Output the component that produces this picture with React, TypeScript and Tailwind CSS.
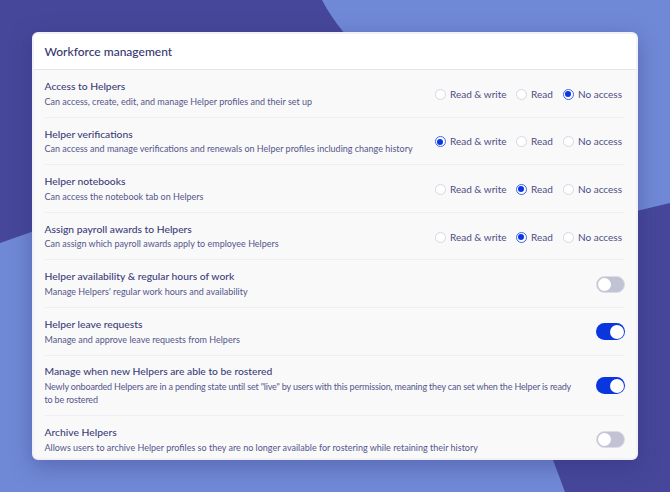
const FONT = "font-['Lato','Liberation_Sans',sans-serif]"

type Access = 'rw' | 'r' | 'none'

interface Row {
  title: string
  desc: string
  access?: Access
  on?: boolean
  tall?: boolean
}

const ROWS: Row[] = [
  { title: 'Access to Helpers', desc: 'Can access, create, edit, and manage Helper profiles and their set up', access: 'none' },
  { title: 'Helper verifications', desc: 'Can access and manage verifications and renewals on Helper profiles including change history', access: 'rw' },
  { title: 'Helper notebooks', desc: 'Can access the notebook tab on Helpers', access: 'r' },
  { title: 'Assign payroll awards to Helpers', desc: 'Can assign which payroll awards apply to employee Helpers', access: 'r' },
  { title: 'Helper availability & regular hours of work', desc: "Manage Helpers' regular work hours and availability", on: false },
  { title: 'Helper leave requests', desc: 'Manage and approve leave requests from Helpers', on: true },
  {
    title: 'Manage when new Helpers are able to be rostered',
    desc: 'Newly onboarded Helpers are in a pending state until set "live" by users with this permission, meaning they can set when the Helper is ready to be rostered',
    on: true,
    tall: true,
  },
  { title: 'Archive Helpers', desc: 'Allows users to archive Helper profiles so they are no longer available for rostering while retaining their history', on: false },
]

function Radio({ label, checked, width }: { label: string; checked: boolean; width: string }) {
  return (
    <div className={`flex shrink-0 items-center gap-[4.5px] ${width}`}>
      {checked ? (
        <span className="flex h-[11px] w-[11px] shrink-0 items-center justify-center rounded-full border border-[#3d63f2] bg-white">
          <span className="h-[6px] w-[6px] rounded-full bg-[#0a36e0]" />
        </span>
      ) : (
        <span className="h-[11px] w-[11px] shrink-0 rounded-full border border-[#d6d7e4] bg-white" />
      )}
      <span className="whitespace-nowrap text-[10px] text-[#4c4d82]">{label}</span>
    </div>
  )
}

function Toggle({ on }: { on: boolean }) {
  return on ? (
    <div className="mt-[1px] flex h-[17px] w-[29px] shrink-0 items-center justify-end rounded-full bg-[#0a36e0] pr-[1px]">
      <span className="h-[14px] w-[14px] rounded-full bg-white" />
    </div>
  ) : (
    <div className="mt-[1px] flex h-[17px] w-[29px] shrink-0 items-center rounded-full border border-[#dcdce6] bg-[#c1c2d4] pl-[1px]">
      <span className="h-[13px] w-[13px] rounded-full bg-white" />
    </div>
  )
}

export default function App() {
  return (
    <div className={`relative h-[492px] w-[670px] overflow-hidden bg-[#46479a] p-[32px] ${FONT}`}>
      {/* fondo */}
      <svg className="absolute inset-0" width="670" height="492" viewBox="0 0 670 492">
        <path d="M322 0 C 335 25 350 40 370 60 L 620 215 L 670 203 L 670 0 Z" fill="#7089d6" />
        <path d="M0 243 L 60 222 L 370 60 L 620 215 L 553 460 L 565 492 L 0 492 Z" fill="#7089d6" />
      </svg>

      <div className="relative h-[428px] w-[606px] overflow-hidden rounded-[6px] border-[2.5px] border-[#f1f1f7] bg-[#f9f9fa] shadow-[0_6px_22px_rgba(40,40,110,0.35)]">
        <div className="flex h-[36px] items-center border-b border-[#e3e4ee] bg-white pt-[1px] pr-[11px] pl-[10.5px]">
          <h1 className="text-[12px] font-medium text-[#35366f]">Workforce management</h1>
        </div>

        <div className="pr-[11px] pl-[10.5px]">
          {ROWS.map((row, i) => (
            <div
              key={row.title}
              className={`flex items-center justify-between border-[#eeeef4] ${row.tall ? 'h-[60px]' : 'h-[47.6px]'} ${i < ROWS.length - 1 ? 'border-b' : ''}`}
            >
              <div className={row.tall ? 'w-[533px]' : ''}>
                <div className="text-[10.3px] leading-[14px] font-medium text-[#3c3d78]">{row.title}</div>
                <div className={`mt-[1.5px] text-[9px] leading-[13px] text-[#55568a] ${row.tall ? 'tracking-[-0.17px]' : ''}`}>{row.desc}</div>
              </div>

              {row.access ? (
                <div className="flex shrink-0 items-center pt-[2px]">
                  <Radio label="Read & write" checked={row.access === 'rw'} width="w-[81px]" />
                  <Radio label="Read" checked={row.access === 'r'} width="w-[47px]" />
                  <Radio label="No access" checked={row.access === 'none'} width="w-[62.5px]" />
                </div>
              ) : (
                <Toggle on={!!row.on} />
              )}
            </div>
          ))}
        </div>
      </div>
    </div>
  )
}
